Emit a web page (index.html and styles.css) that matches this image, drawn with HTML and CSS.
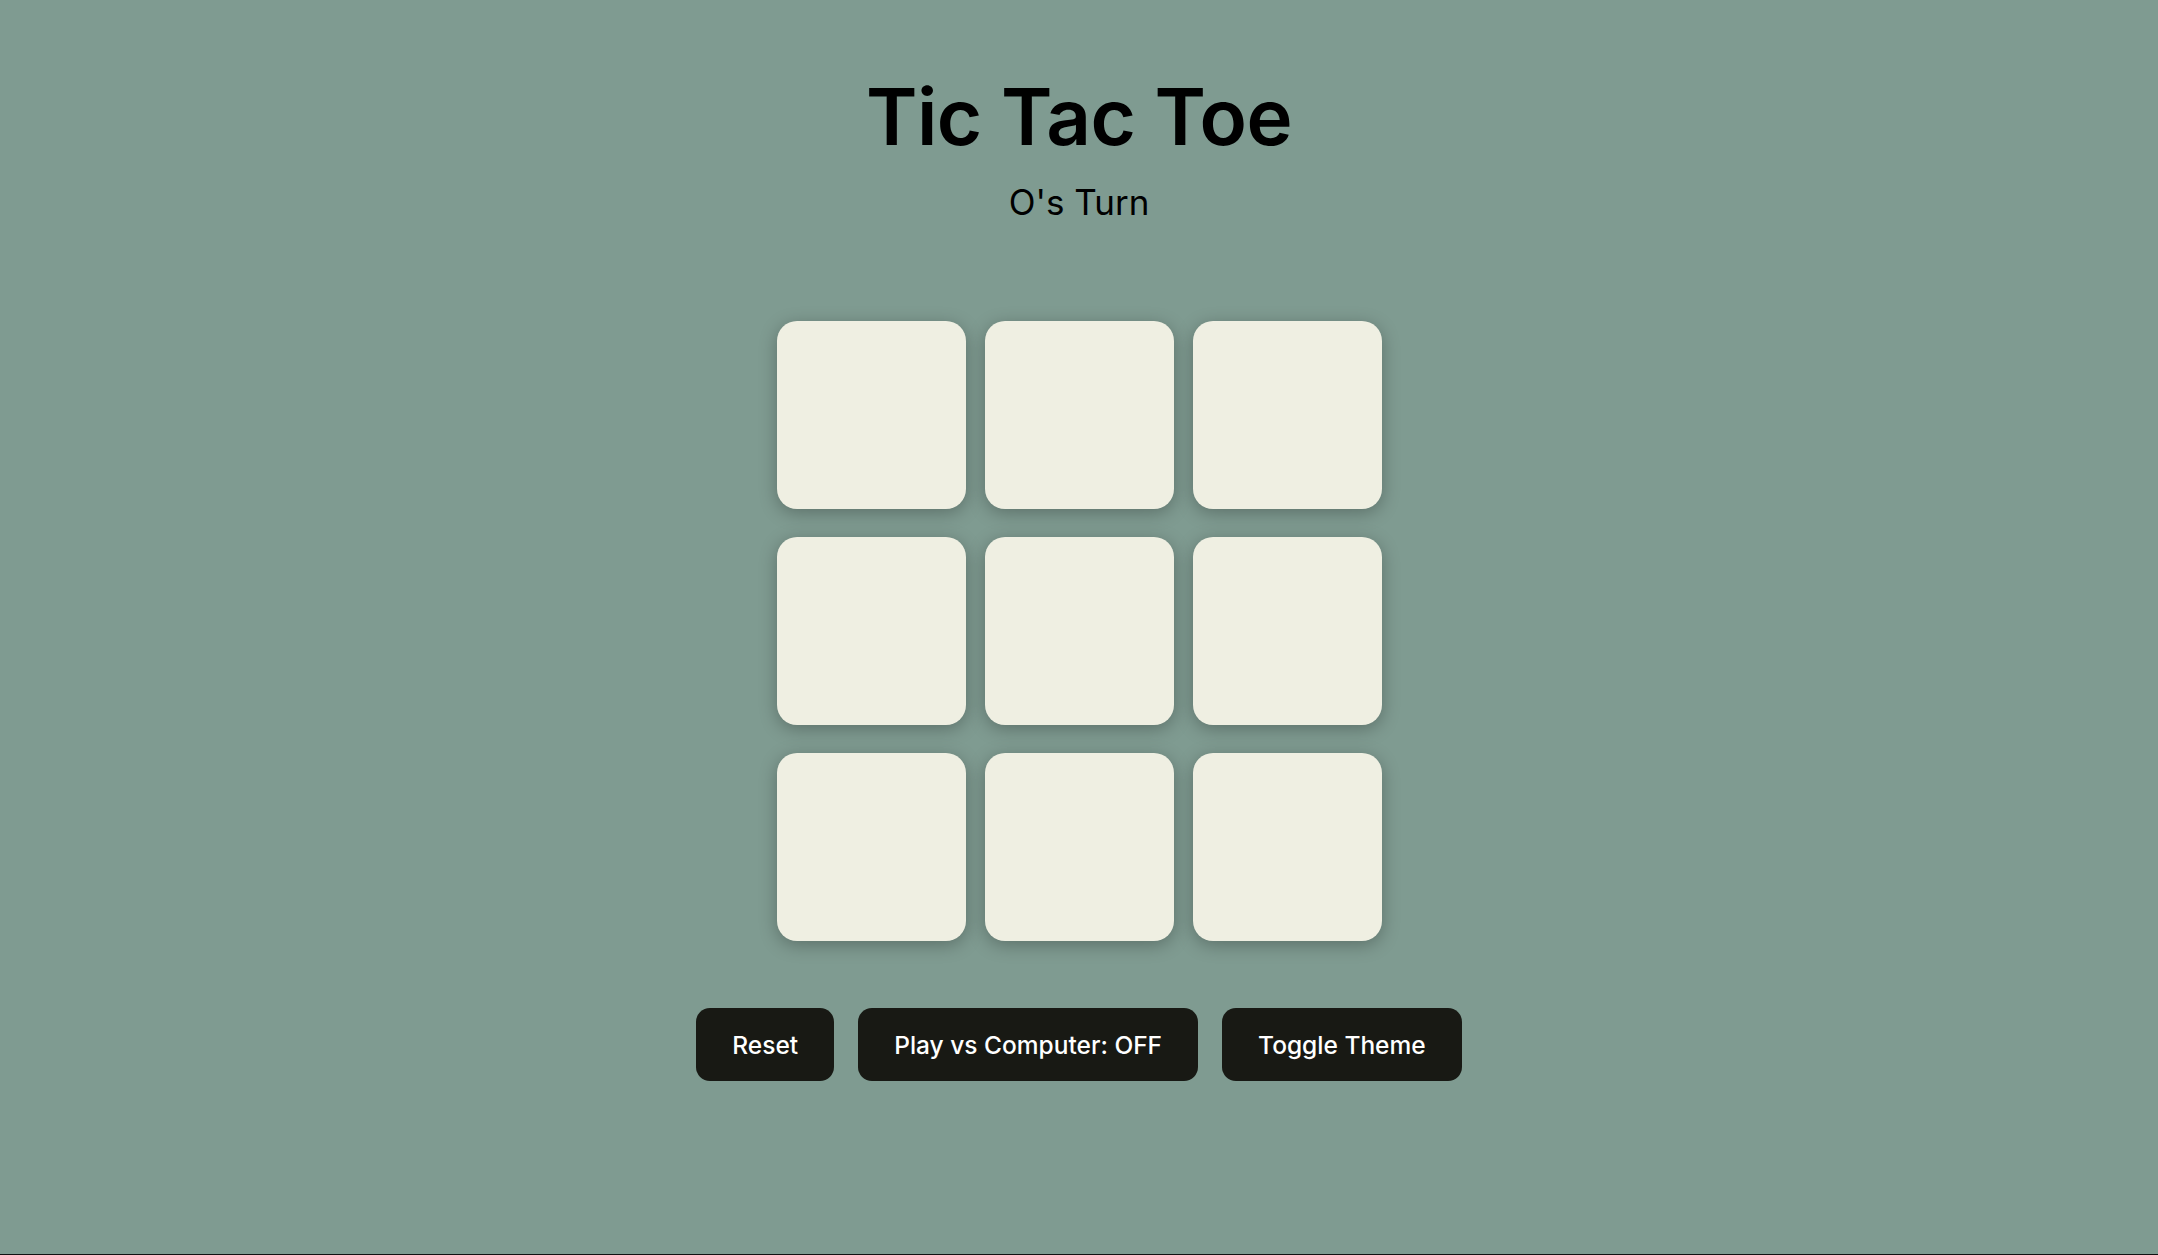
FILE: index.html
```html
<!DOCTYPE html>
<html lang="en">
<head>
<meta charset="utf-8">
<title>Tic Tac Toe</title>
<link rel="stylesheet" href="styles.css">
</head>
<body>
<main class="app">
  <h1 class="title">Tic Tac Toe</h1>
  <p class="status">O's Turn</p>
  <div class="board">
    <button class="cell"></button>
    <button class="cell"></button>
    <button class="cell"></button>
    <button class="cell"></button>
    <button class="cell"></button>
    <button class="cell"></button>
    <button class="cell"></button>
    <button class="cell"></button>
    <button class="cell"></button>
  </div>
  <div class="controls">
    <button class="btn">Reset</button>
    <button class="btn">Play vs Computer: OFF</button>
    <button class="btn">Toggle Theme</button>
  </div>
</main>
</body>
</html>
```
FILE: styles.css
```css
html, body {
  margin: 0;
  padding: 0;
}
body {
  background: #7f9b91;
  font-family: "Inter", "Open Sans", sans-serif;
  color: #000;
  height: 1255px;
  box-sizing: border-box;
  border-bottom: 1px solid #111;
  overflow: hidden;
}
.app {
  display: flex;
  flex-direction: column;
  align-items: center;
}
.title {
  margin: 70px 0 0;
  font-size: 78px;
  line-height: 94px;
  font-weight: 600;
  letter-spacing: -0.5px;
}
.status {
  margin: 18px 0 0;
  font-size: 35px;
  line-height: 40px;
  font-weight: 400;
}
.board {
  margin-top: 99px;
  display: grid;
  grid-template-columns: repeat(3, 189px);
  grid-auto-rows: 188px;
  column-gap: 19px;
  row-gap: 28px;
}
.cell {
  border: none;
  padding: 0;
  background: #efefe2;
  border-radius: 20px;
  box-shadow: 0 4px 18px rgba(0, 0, 0, 0.28);
}
.controls {
  margin-top: 67px;
  display: flex;
  gap: 24px;
}
.btn {
  height: 73px;
  padding: 0 36px;
  border: none;
  border-radius: 14px;
  background: #181914;
  color: #fff;
  font-family: "Inter", "Open Sans", sans-serif;
  font-size: 24.5px;
  font-weight: 500;
}
```
